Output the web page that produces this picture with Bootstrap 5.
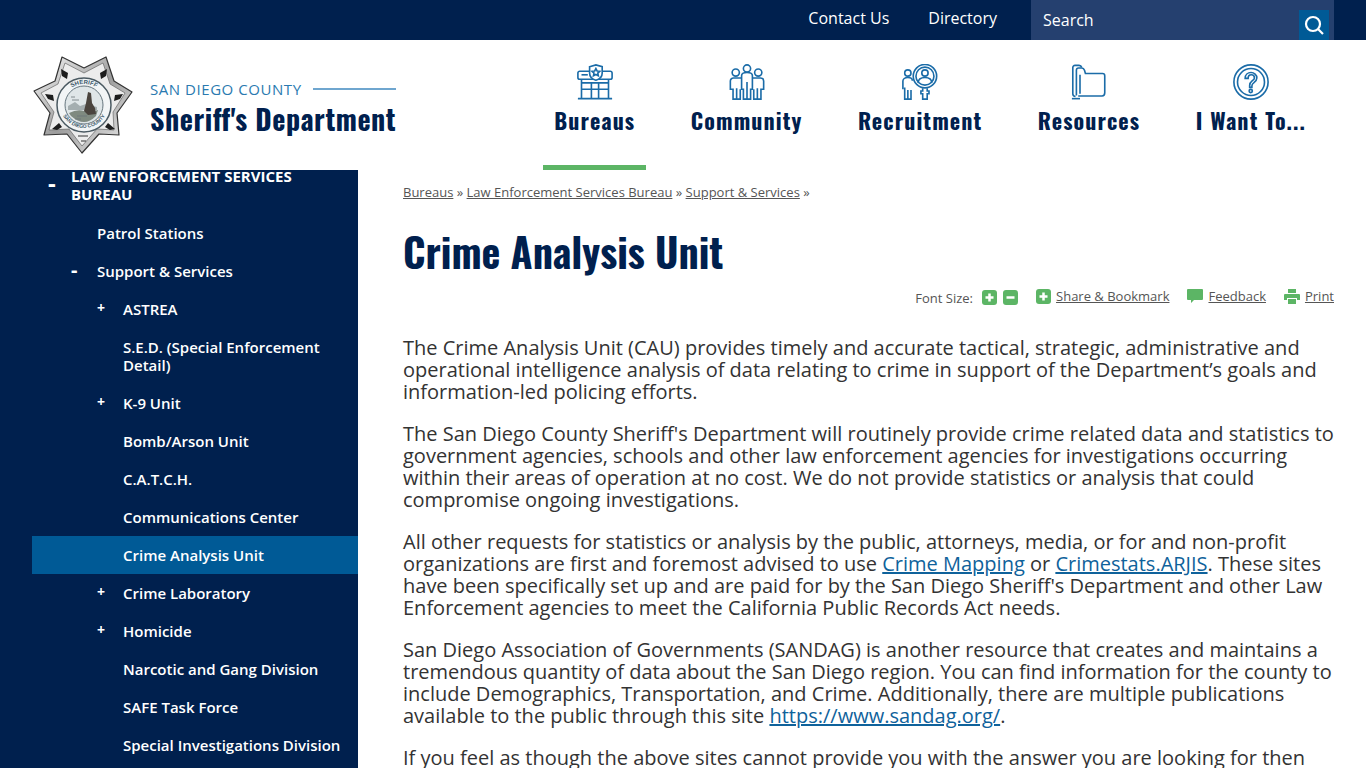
<!DOCTYPE html>
<html lang="en">
<head>
    <meta charset="UTF-8">
    <meta name="viewport" content="width=device-width, initial-scale=1.0">
    <title>Crime Analysis Unit</title>
    <link href="https://cdn.jsdelivr.net/npm/bootstrap@5.3.3/dist/css/bootstrap.min.css" rel="stylesheet">
    <style>
        html, body { height: 768px; overflow: hidden; }
        body { font-family: "Open Sans", "Liberation Sans", sans-serif; color: #333; background: #fff; }
        .cond { font-family: Oswald, "Liberation Sans", sans-serif; font-weight: 700; color: #00204e; }

        .topbar { height: 40px; background: #00204e; }
        .topbar a { color: #fff; font-size: 16px; text-decoration: none; }
        .top-links { gap: 39px; margin-right: 34px; margin-top: -4px; }
        .searchbox { width: 303px; height: 40px; background: #25406f; color: #fff; font-size: 16px; padding-left: 12px; margin-right: 32px; padding-right: 5px; }
        .searchbtn { width: 30px; height: 30px; background: #005a96; margin-top: 10px; }

        .mainhead { height: 130px; }
        .logo-wrap { margin-left: 33px; margin-top: 14px; }
        .logo-text { margin-left: 16px; padding-top: 25px; width: 246px; }
        .county { color: #2a7ab0; font-size: 15px; letter-spacing: .55px; line-height: 20px; white-space: nowrap; }
        .county-line { height: 2px; background: #6fa6cf; margin-left: 11px; }
        .sheriff { font-size: 28px; line-height: 40px; white-space: nowrap; letter-spacing: .55px; }

        .mainnav { gap: 33.5px; margin-right: 49px; }
        .navitem { padding: 24px 11px 0; height: 130px; text-align: center; text-decoration: none; border-bottom: 5px solid transparent; }
        .navitem.now { border-bottom-color: #5cb565; }
        .navitem svg { display: block; margin: 0 auto 4px; }
        .navitem span { font-size: 22px; line-height: 32px; letter-spacing: 1.1px; white-space: nowrap; display: block; }

        .sidemenu { width: 358px; height: 598px; background: #00204e; overflow: hidden; flex: none; }
        .sidelist { list-style: none; margin: -13px 0 0; padding: 0; }
        .sidelist a { display: block; color: #fff; font-size: 15px; font-weight: 600; line-height: 18px; padding: 10px 10px 10px 0; text-decoration: none; position: relative; }
        .lv1 a { padding-left: 71px; padding-right: 40px; padding-bottom: 11px; font-weight: 700; }
        .lv2 a { padding-left: 97px; }
        .lv3 a { padding-left: 123px; }
        .sidelist a.here { background: #005a96; margin-left: 32px; padding-left: 91px; }
        .sign { position: absolute; top: 9px; font-weight: 700; }
        .lv1 .sign { left: 48px; top: 14px; font-size: 24px; line-height: 24px; }
        .lv2 .sign { left: 71px; font-size: 20px; line-height: 18px; }
        .lv3 .sign { left: 97px; top: 9px; font-size: 14px; }

        .pagebody { padding: 13px 32px 0 45px; flex: 1; min-width: 0; }
        .crumbs { font-size: 13px; line-height: 18px; color: #555; }
        .crumbs a { color: #555; }
        .pagetitle { font-size: 40px; line-height: 54px; margin: 23px 0 0; }
        .tools { font-size: 13px; line-height: 18px; color: #555; margin-top: 9px; height: 50px; }
        .tools a { color: #555; }
        .tool { gap: 5px; margin-left: 18px; }
        .tools svg { display: block; flex: none; }
        .tool svg { margin-top: 2px; }
        .fontsize { margin-top: 3px; gap: 6px; }
        .fontsize-label { margin-top: -1px; margin-right: 3px; }
        .article p { font-size: 20px; line-height: 22px; margin: 0 0 20px; color: #333; }
        .article a { color: #0f629b; }
    </style>
</head>
<body>
    <div class="topbar d-flex justify-content-end align-items-center">
        <div class="d-flex top-links">
            <a href="#">Contact Us</a>
            <a href="#">Directory</a>
        </div>
        <div class="searchbox d-flex justify-content-between align-items-center">
            <span>Search</span>
            <div class="searchbtn d-flex align-items-center justify-content-center">
                <svg width="22" height="22" viewBox="0 0 22 22" fill="none" stroke="#fff" stroke-width="2.2"><circle cx="10" cy="10" r="7"/><path d="M15 15l5 5"/></svg>
            </div>
        </div>
    </div>

    <div class="mainhead d-flex justify-content-between">
        <div class="d-flex logo-wrap">
            <svg width="101" height="100" viewBox="0 0 101 100">
                <defs>
                    <linearGradient id="silver" x1="0" y1="0" x2="1" y2="1">
                        <stop offset="0" stop-color="#fafafa"/><stop offset=".5" stop-color="#9c9c9c"/><stop offset="1" stop-color="#f2f2f2"/>
                    </linearGradient>
                    <path id="arcTop" d="M29 52a22 22 0 0 1 44 0"/>
                    <path id="arcBottom" d="M27 50a24 24 0 0 0 48 0"/>
                </defs>
                <polygon points="29,3 51,14 73,3 81,27 99,38 84,59 86,81 66,80 49,99 34,80 11,81 17,59 1,37 22,27" fill="url(#silver)" stroke="#333" stroke-width="1.2" stroke-linejoin="round"/>
                <polygon points="32,9 51,19 70,9 77,30 92,39 80,58 81,76 64,75 49,92 36,75 16,76 21,58 8,39 25,30" fill="#ececec" stroke="#555" stroke-width=".6"/>
                <circle cx="51" cy="51" r="27" fill="#f2f5f6" stroke="#4b5a62" stroke-width="1.5"/>
                <circle cx="51" cy="51" r="19" fill="#dfe6e8" stroke="#66767e" stroke-width="1"/>
                <text font-size="6" font-weight="700" fill="#3d5a6c" font-family="Liberation Sans, sans-serif"><textPath href="#arcTop" startOffset="50%" text-anchor="middle">SHERIFF</textPath></text>
                <text font-size="5" font-weight="700" fill="#3d5a6c" font-family="Liberation Sans, sans-serif"><textPath href="#arcBottom" startOffset="50%" text-anchor="middle">SAN DIEGO COUNTY</textPath></text>
                <path d="M35 52l7-4 5 4 6-2 11 3v3H35z" fill="#a4aeb0"/>
                <path d="M36 59q8-4 15-2t14-1l-2 6q-6 6-12 6t-13-6z" fill="#7f8a80"/>
                <path d="M55 38l3 1 1 10 3 5 1 6-8 1-4-4 2-8z" fill="#4a443e"/>
                <path d="M39 46h7M38 43h4M44 62h10M42 65h6" stroke="#6b7478" stroke-width=".8"/>
                <path d="M28 15l7 4-1 6-5-3zM74 15l-7 4 1 6 5-3zM12 40l8 1 1 6-6-2zM90 40l-8 1-1 6 6-2zM19 75l7-6 3 4-5 3zM82 75l-7-6-3 4 5 3z" fill="#1d1d1d"/>
                <path d="M45 82h10M48 87h5" stroke="#333" stroke-width="1.2"/>
            </svg>
            <div class="logo-text">
                <div class="d-flex align-items-center"><span class="county">SAN DIEGO COUNTY</span><span class="county-line flex-grow-1"></span></div>
                <div class="cond sheriff">Sheriff's Department</div>
            </div>
        </div>
        <nav class="d-flex mainnav">
            <a href="#" class="navitem now">
                <svg width="36" height="36" viewBox="0 0 40 40" fill="none" stroke="#1b6ca8" stroke-width="1.8">
                    <path d="M14 8H3a2 2 0 0 0-2 2v5a2 2 0 0 0 2 2h34a2 2 0 0 0 2-2v-5a2 2 0 0 0-2-2h-9"/>
                    <path d="M14 3l7-2 7 2v7c0 4-3 7-7 8-4-1-7-4-7-8z" fill="#fff"/>
                    <path d="M21 5l1.300 2.700 3 .4-2.200 2 .6 3-2.700-1.500-2.700 1.500.6-3-2.200-2 3-.4z"/>
                    <path d="M5 17v21M35 17v21M1 38.500h38M5 28h30M5 21h30M16 21v17M24 21v17"/>
                    <path d="M5 12h7"/>
                </svg>
                <span class="cond">Bureaus</span>
            </a>
            <a href="#" class="navitem">
                <svg width="36" height="36" viewBox="0 0 40 40" fill="none" stroke="#1b6ca8" stroke-width="1.8">
                    <circle cx="20" cy="5" r="4"/><circle cx="7.500" cy="9.500" r="4"/><circle cx="32.500" cy="9.500" r="4"/>
                    <path d="M14 13c0-2 2-3.500 6-3.500s6 1.500 6 3.500v15h-2v11h-8V28h-2zM20 20v19"/>
                    <path d="M14 15.500H5c-2 0-3.500 1.500-3.500 3.500v9h3v11h8V28"/>
                    <path d="M26 15.500h9c2 0 3.500 1.500 3.500 3.500v9h-3v11h-8V28"/>
                    <path d="M8.500 27v12M31.500 27v12"/>
                </svg>
                <span class="cond">Community</span>
            </a>
            <a href="#" class="navitem">
                <svg width="36" height="36" viewBox="0 0 40 40" fill="none" stroke="#1b6ca8" stroke-width="1.8">
                    <circle cx="6.500" cy="10" r="3.500"/>
                    <path d="M1 28V19c0-2 2-4 5.500-4s5 1.500 5 3.500M3 26v13h7V29M6.500 29v10"/>
                    <circle cx="25.500" cy="13.500" r="13"/><circle cx="25.500" cy="13.500" r="10"/>
                    <circle cx="25.500" cy="10" r="3.500"/>
                    <path d="M18 21c0-4 3-6 7.500-6s7.500 2 7.500 6"/>
                    <path d="M23 27v3h-2v3h2v6h5v-6h2v-3h-2v-3"/>
                </svg>
                <span class="cond">Recruitment</span>
            </a>
            <a href="#" class="navitem">
                <svg width="36" height="36" viewBox="0 0 40 40" fill="none" stroke="#1b6ca8" stroke-width="1.8">
                    <path d="M5 36C3 36 2 35 2 33V4c0-1.500 1-2.500 2.500-2.500H9c1.500 0 2.500 1 3 2.500"/>
                    <path d="M6 35V7c0-1.500 1-2.500 2.500-2.500H12c1.500 0 2.500 1 3 2.500l1 3.500h19c1.500 0 2.500 1 2.500 2.500v19c0 2-1 3.500-3 3.500H8"/>
                    <path d="M10 33V12"/>
                    <path d="M1 38.500h9"/>
                </svg>
                <span class="cond">Resources</span>
            </a>
            <a href="#" class="navitem">
                <svg width="36" height="36" viewBox="0 0 40 40" fill="none" stroke="#1b6ca8" stroke-width="1.8">
                    <circle cx="20" cy="20" r="19"/><circle cx="20" cy="20" r="15"/>
                    <path d="M13.500 16c0-4 3-6.500 6.500-6.500s6.500 2.500 6.500 6c0 2.500-1.500 4-3.500 5.500-1.500 1-2 2-2 3.500v1.500h-2.500V24c0-2.500 1-4 3-5.500 1.500-1 2.300-1.800 2.300-3 0-2-1.500-3.500-3.500-3.500s-3.500 1.500-3.500 4z"/>
                    <circle cx="19.700" cy="30" r="1.800"/>
                </svg>
                <span class="cond">I Want To...</span>
            </a>
        </nav>
    </div>

    <div class="d-flex">
        <aside class="sidemenu">
            <ul class="sidelist">
                <li class="lv1"><a href="#"><span class="sign">-</span>LAW ENFORCEMENT SERVICES BUREAU</a></li>
                <li class="lv2"><a href="#">Patrol Stations</a></li>
                <li class="lv2"><a href="#"><span class="sign">-</span>Support &amp; Services</a></li>
                <li class="lv3"><a href="#"><span class="sign">+</span>ASTREA</a></li>
                <li class="lv3"><a href="#">S.E.D. (Special Enforcement Detail)</a></li>
                <li class="lv3"><a href="#"><span class="sign">+</span>K-9 Unit</a></li>
                <li class="lv3"><a href="#">Bomb/Arson Unit</a></li>
                <li class="lv3"><a href="#">C.A.T.C.H.</a></li>
                <li class="lv3"><a href="#">Communications Center</a></li>
                <li class="lv3"><a href="#" class="here">Crime Analysis Unit</a></li>
                <li class="lv3"><a href="#"><span class="sign">+</span>Crime Laboratory</a></li>
                <li class="lv3"><a href="#"><span class="sign">+</span>Homicide</a></li>
                <li class="lv3"><a href="#">Narcotic and Gang Division</a></li>
                <li class="lv3"><a href="#">SAFE Task Force</a></li>
                <li class="lv3"><a href="#">Special Investigations Division</a></li>
            </ul>
        </aside>
        <main class="pagebody">
            <div class="crumbs"><a href="#">Bureaus</a> » <a href="#">Law Enforcement Services Bureau</a> » <a href="#">Support &amp; Services</a> »</div>
            <h1 class="cond pagetitle">Crime Analysis Unit</h1>
            <div class="tools d-flex justify-content-end align-items-start">
                <span class="d-flex align-items-start fontsize"><span class="fontsize-label">Font Size:</span>
                    <svg width="15" height="15" viewBox="0 0 15 15"><rect width="15" height="15" rx="3" fill="#5cb565"/><path d="M7.500 3.500v8M3.500 7.500h8" stroke="#fff" stroke-width="2.500"/></svg>
                    <svg width="15" height="15" viewBox="0 0 15 15"><rect width="15" height="15" rx="3" fill="#5cb565"/><path d="M3.500 7.500h8" stroke="#fff" stroke-width="2.500"/></svg>
                </span>
                <a href="#" class="d-flex tool"><svg width="15" height="15" viewBox="0 0 15 15"><rect width="15" height="15" rx="3" fill="#5cb565"/><path d="M7.500 3.500v8M3.500 7.500h8" stroke="#fff" stroke-width="2.500"/></svg>Share &amp; Bookmark</a>
                <a href="#" class="d-flex tool"><svg width="16" height="15" viewBox="0 0 16 15"><path d="M1 0h14a1 1 0 0 1 1 1v9a1 1 0 0 1-1 1H7l-3 3v-3H1a1 1 0 0 1-1-1V1a1 1 0 0 1 1-1z" fill="#5cb565"/></svg>Feedback</a>
                <a href="#" class="d-flex tool"><svg width="16" height="15" viewBox="0 0 16 15" fill="#5cb565"><path d="M4 0h8v4H4zM1 5h14a1 1 0 0 1 1 1v5h-3V9H3v2H0V6a1 1 0 0 1 1-1zM4 10h8v5H4z"/></svg>Print</a>
            </div>
            <div class="article">
                <p>The Crime Analysis Unit (CAU) provides timely and accurate tactical, strategic, administrative and operational intelligence analysis of data relating to crime in support of the Department’s goals and information-led policing efforts.</p>
                <p>The San Diego County Sheriff's Department will routinely provide crime related data and statistics to government agencies, schools and other law enforcement agencies for investigations occurring within their areas of operation at no cost. We do not provide statistics or analysis that could compromise ongoing investigations.</p>
                <p>All other requests for statistics or analysis by the public, attorneys, media, or for and non-profit organizations are first and foremost advised to use <a href="#">Crime Mapping</a> or <a href="#">Crimestats.ARJIS</a>. These sites have been specifically set up and are paid for by the San Diego Sheriff's Department and other Law Enforcement agencies to meet the California Public Records Act needs.</p>
                <p>San Diego Association of Governments (SANDAG) is another resource that creates and maintains a tremendous quantity of data about the San Diego region. You can find information for the county to include Demographics, Transportation, and Crime. Additionally, there are multiple publications available to the public through this site <a href="#">https://www.sandag.org/</a>.</p>
                <p>If you feel as though the above sites cannot provide you with the answer you are looking for then</p>
            </div>
        </main>
    </div>
    <script src="https://cdn.jsdelivr.net/npm/bootstrap@5.3.3/dist/js/bootstrap.bundle.min.js"></script>
</body>
</html>
